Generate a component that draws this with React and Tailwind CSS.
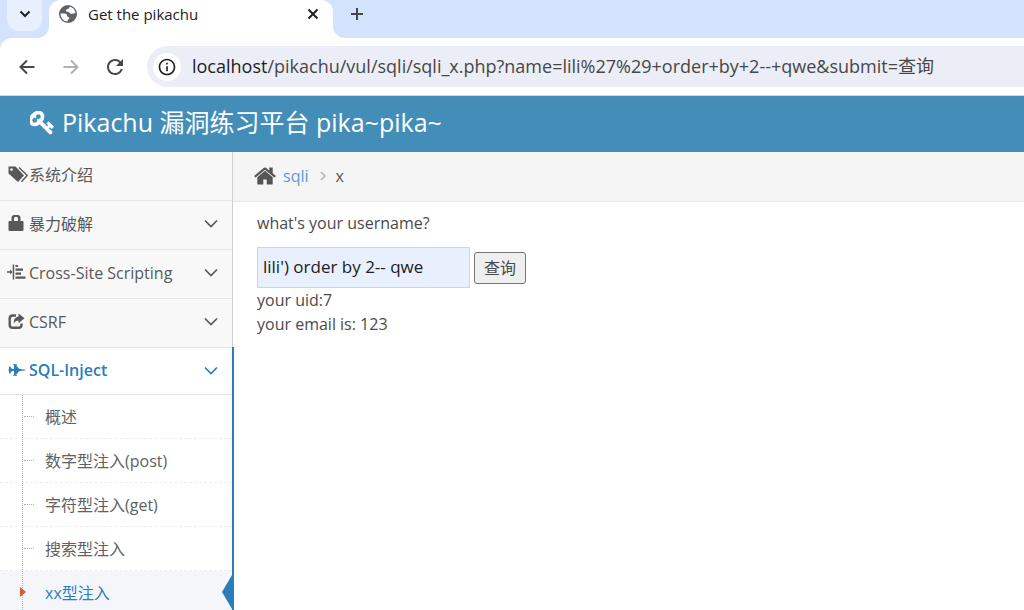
import React, { useState } from "react";
import { MdInfoOutline, MdRefresh } from "react-icons/md";

const menuItems = [
  { name: "系统介绍", icon: "tags", expandable: false },
  { name: "暴力破解", icon: "lock", expandable: true },
  { name: "Cross-Site Scripting", icon: "align", expandable: true },
  { name: "CSRF", icon: "share", expandable: true },
  { name: "SQL-Inject", icon: "jet", expandable: true, open: true },
];

const subItems = ["概述", "数字型注入(post)", "字符型注入(get)", "搜索型注入", "xx型注入"];

const KeyIcon = () => (
  <svg viewBox="60 120 1664 1664" className="h-6 w-6 shrink-0" fill="currentColor" stroke="currentColor" strokeWidth="60">
    <path d="M832 512q0-80-56-136t-136-56-136 56-56 136q0 42 19 83-41-19-83-19-80 0-136 56t-56 136 56 136 136 56 136-56 56-136q0-42-19-83 41 19 83 19 80 0 136-56t56-136zm851 704q0 17-49 66t-66 49q-9 0-28.5-16t-36.5-33-38.5-40-24.5-26l-96 96 220 220q28 28 28 68 0 42-39 81t-81 39q-40 0-68-28l-671-671q-176 131-365 131-163 0-265.5-102.5t-102.5-265.5q0-160 95-313t248-248 313-95q163 0 265.5 102.5t102.5 265.5q0 189-131 365l355 355 96-96q-3-3-26-24.5t-40-38.5-33-36.5-16-28.5q0-17 49-66t66-49q13 0 23 10 6 6 46 44.5t82 79.5 86.5 86 73 78 28.5 41z" />
  </svg>
);

const HomeIcon = () => (
  <svg viewBox="0 0 1792 1792" className="h-6 w-6 shrink-0" fill="currentColor">
    <path d="M1472 992v480q0 26-19 45t-45 19h-384v-384h-256v384h-384q-26 0-45-19t-19-45v-480q0-1 .5-3t.5-3l575-474 575 474q1 2 1 6zm223-69l-62 74q-8 9-21 11h-3q-13 0-21-7l-692-577-692 577q-12 8-24 7-13-2-21-11l-62-74q-8-10-7-23.5t11-21.5l719-599q32-26 76-26t76 26l244 204v-195q0-14 9-23t23-9h192q14 0 23 9t9 23v408l219 182q10 8 11 21.5t-7 23.5z" />
  </svg>
);

const GlobeIcon = () => (
  <svg viewBox="0 0 20 20" className="h-5 w-5 shrink-0">
    <circle cx="10" cy="10" r="9" fill="#5f6368" />
    <path
      d="M12.3 2.8C11 3 11.4 4.6 10 5c-1.500.4-2.300.8-2 2 .2 1 1.300.8 2.500.9 1.200.1 1 1.600 2.200 1.900 1.500.3 2.500-.6 4.800-.6A7.600 7.600 0 0 0 12.300 2.800z"
      fill="#fff"
    />
    <path
      d="M2.600 9.200c2 .2 5.200.2 6 1.100.7.9 0 1.700 1 2.400.9.6 1.800.3 1.700 1.500-.1 1.100-1.700 1-1.700 2.100v1.300A7.500 7.500 0 0 1 2.600 9.200z"
      fill="#fff"
    />
  </svg>
);

const ArrowIcon = () => (
  <svg viewBox="0 0 20 20" className="h-5 w-5" fill="none" stroke="currentColor" strokeWidth="2">
    <path d="M10 3.500L3.500 10l6.500 6.500M3.500 10H17.500" />
  </svg>
);

const ChevronDown = () => (
  <svg viewBox="0 0 14 9" className="ml-auto h-[9px] w-3.5" fill="none" stroke="currentColor" strokeWidth="1.7">
    <path d="M1 1.500l6 6 6-6" />
  </svg>
);

const MenuIcon = ({ name }) => {
  if (name === "tags") {
    return (
      <svg viewBox="0 0 21 18" className="h-[18px] w-[21px] shrink-0" fill="currentColor">
        <path fillRule="evenodd" d="M.5 .5H7.500L16 9.500 10 16 .5 7.500zM3.500 2.200a1.300 1.300 0 1 0 .01 0z" />
        <path d="M11 1.500L19.200 9.500 13.500 15.800" fill="none" stroke="currentColor" strokeWidth="1.400" />
      </svg>
    );
  }
  if (name === "lock") {
    return (
      <svg viewBox="0 0 21 18" className="h-[18px] w-[21px] shrink-0" fill="currentColor">
        <path
          fillRule="evenodd"
          d="M3.500 6V3Q3.500 0 6.500 0H9.500Q12.500 0 12.500 3V6H14.500Q15.500 6 15.500 7V15Q15.500 16 14.500 16H1.500Q.5 16 .5 15V7Q.5 6 1.500 6zM6 6H10V3.500Q10 2 8.800 2H7.200Q6 2 6 3.500z"
        />
      </svg>
    );
  }
  if (name === "align") {
    return (
      <svg viewBox="0 0 21 18" className="h-[18px] w-[21px] shrink-0 overflow-visible" fill="currentColor">
        <path d="M-1 7.300H2V5.500L4.500 8 2 10.500V8.700H-1zM4.700 .5H6.200V15.500H4.700zM7.500 1H10V3H7.500zM7.500 4.500H15V6.700H7.500zM7.500 8.500H13V10.700H7.500zM7.500 12.500H17.500V14.700H7.500z" />
      </svg>
    );
  }
  if (name === "share") {
    return (
      <svg viewBox="0 0 21 18" className="h-[18px] w-[21px] shrink-0">
        <path d="M8 2.500H5Q1.700 2.500 1.700 5.500V12Q1.700 14.800 4.700 14.800H10.500Q13.500 14.800 13.500 12V10.500" fill="none" stroke="currentColor" strokeWidth="2.400" />
        <path d="M10.500 .5L16.500 5.300 10.500 10.200V7.500Q7.500 7.500 5.800 10.700 5.500 4 10.500 3.500z" fill="currentColor" />
      </svg>
    );
  }
  return (
    <svg viewBox="0 0 21 18" className="h-[18px] w-[21px] shrink-0" fill="currentColor">
      <path d="M1 5.500H2L4 8H6V4H5V3.300H9V4H8L10.500 7.300 12 8 17.500 8.700V9.300L12 10 10.500 10.700 8 14H9V14.700H5V14H6V10H4L2 12.500H1V9.700H.5V8.300H1z" />
    </svg>
  );
};

const BrowserBar = () => (
  <div className="bg-[#d3e3fd] text-[#202124]">
    <div className="flex h-[38px]">
      <div className="w-[49px] bg-white">
        <div className="h-full rounded-br-xl bg-[#d3e3fd] pl-[7px]">
          <button aria-label="Search tabs" className="flex h-[31px] w-[35px] items-center justify-center rounded-b-xl bg-[#e9f0fd] pb-1">
            <svg viewBox="0 0 12 8" className="h-2 w-3" fill="none" stroke="currentColor" strokeWidth="2">
              <path d="M1.500 1.500L6 6 10.500 1.500" />
            </svg>
          </button>
        </div>
      </div>
      <div className="flex w-[284px] items-start rounded-t-xl bg-white pl-[9px]">
        <div className="flex h-7 flex-1 items-center">
          <GlobeIcon />
          <span className="ml-2.5 pt-px text-[15px]">Get the pikachu</span>
          <button aria-label="Close tab" className="mr-[14px] ml-auto">
            <svg viewBox="0 0 12 12" className="h-3 w-3" fill="none" stroke="currentColor" strokeWidth="2">
              <path d="M1.500 1.500L10.500 10.500M10.500 1.500L1.500 10.500" />
            </svg>
          </button>
        </div>
      </div>
      <div className="flex-1 bg-white">
        <div className="h-full rounded-bl-xl bg-[#d3e3fd]">
          <button aria-label="New tab" className="ml-[17px] flex h-7 items-center">
            <svg viewBox="0 0 14 14" className="h-3.5 w-3.5 text-[#474747]" fill="none" stroke="currentColor" strokeWidth="2">
              <path d="M7 1V13M1 7H13" />
            </svg>
          </button>
        </div>
      </div>
    </div>
    <div className="flex h-[58px] items-center rounded-tl-xl border-b border-[#cfdbe0] bg-white pl-[17px]">
      <button aria-label="Back" className="text-[#474747]">
        <ArrowIcon />
      </button>
      <button aria-label="Forward" className="ml-6 rotate-180 text-[#b0b0b0]">
        <ArrowIcon />
      </button>
      <button aria-label="Reload" className="ml-[22px]">
        <MdRefresh className="h-6 w-6 text-[#474747]" />
      </button>
      <div className="ml-5 flex h-[41px] flex-1 items-center rounded-l-full bg-[#ebeef7] pl-1.5">
        <span className="flex h-7 w-7 items-center justify-center rounded-full bg-white">
          <MdInfoOutline className="h-5 w-5" />
        </span>
        <p className="ml-[11px] text-[18px] whitespace-nowrap text-[#474747]">
          <span className="text-[#202124]">localhost</span>
          /pikachu/vul/sqli/sqli_x.php?name=lili%27%29+order+by+2--+qwe&amp;submit=查询
        </p>
      </div>
    </div>
  </div>
);

const SubMenu = () => (
  <ul className="text-[#616161]">
    {subItems.map((name, i) => {
      const active = i === subItems.length - 1;
      return (
        <li key={name} className={active ? "relative bg-[#f4f6fa]" : "relative border-b border-dashed border-[#ededed]"}>
          <span className="absolute inset-y-0 left-[22px] border-l border-dotted border-[#8cb8dc]" />
          {active ? (
            <>
              <svg viewBox="0 0 6 10" className="absolute top-4 left-5 h-2.5 w-1.5" fill="#c86139">
                <path d="M0 0l6 5-6 5z" />
              </svg>
              <svg viewBox="0 0 10 34" className="absolute top-1 right-0 h-[34px] w-2.5" fill="#2b7dbc">
                <path d="M10 0v34L0 17z" />
              </svg>
            </>
          ) : (
            <span className="absolute top-[21px] left-6 w-2.5 border-t border-dotted border-[#8cb8dc]" />
          )}
          <a href="#" className={active ? "flex h-[43px] items-center pl-[45px] text-[#2b7dbc]" : "flex h-[43px] items-center pl-[45px]"}>
            {name}
          </a>
        </li>
      );
    })}
  </ul>
);

const Sidebar = () => (
  <nav className="w-[233px] shrink-0 bg-[#f8f8f8] text-[16px] text-[#585858]">
    {menuItems.map((item) => (
      <div key={item.name} className={item.open ? "-mt-px -mr-px border-r-2 border-[#2b7dbc] bg-white" : "border-r border-[#d0d0d0]"}>
        <a
          href="#"
          className={
            item.open
              ? "flex h-12 items-center border-y border-[#e5e5e5] pr-[14px] pb-0.5 pl-2 font-semibold text-[#2b7dbc]"
              : "flex h-[49px] items-center border-b border-[#e5e5e5] pr-[14px] pb-[3px] pl-2"
          }
        >
          <MenuIcon name={item.icon} />
          <span>{item.name}</span>
          {item.expandable && <ChevronDown />}
        </a>
        {item.open && <SubMenu />}
      </div>
    ))}
  </nav>
);

const App = () => {
  const [username, setUsername] = useState("lili') order by 2-- qwe");

  return (
    <div className="flex h-screen flex-col overflow-hidden bg-white font-['Open_Sans','Noto_Sans_CJK_SC',sans-serif]">
      <BrowserBar />
      <header className="flex h-14 shrink-0 items-center bg-[#438eb9] pb-0.5 pl-[30px] text-white">
        <KeyIcon />
        <h1 className="ml-2 text-[25px]">Pikachu 漏洞练习平台 pika~pika~</h1>
      </header>
      <div className="flex flex-1">
        <Sidebar />
        <main className="flex-1 text-[16px]">
          <div className="flex h-[50px] items-center border-b border-[#e5e5e5] bg-[#f5f5f5] pb-0.5 pl-5 text-[#555]">
            <HomeIcon />
            <a href="#" className="ml-1.5 text-[#5b9bd0]">
              sqli
            </a>
            <svg viewBox="0 0 6 10" className="mr-2.5 ml-[11px] h-2.5 w-1.5" fill="none" stroke="#b2b6bf" strokeWidth="1.7">
              <path d="M1 1l4 4-4 4" />
            </svg>
            <span>x</span>
          </div>
          <form className="px-6 pt-[9px] leading-6 text-[#4a4a4a]" onSubmit={(e) => e.preventDefault()}>
            <label htmlFor="username">what's your username?</label>
            <div className="mt-3 flex items-center">
              <input
                id="username"
                type="text"
                value={username}
                onChange={(e) => setUsername(e.target.value)}
                className="h-[41px] w-[213px] border border-[#d0d5dd] bg-[#e8f0fe] px-[5px] pb-0.5 text-[17px] text-[#202020]"
              />
              <button type="submit" className="ml-1 h-8 w-[52px] rounded-[3px] border border-[#767676] bg-[#efefef]">
                查询
              </button>
            </div>
            <p>your uid:7</p>
            <p>your email is: 123</p>
          </form>
        </main>
      </div>
    </div>
  );
};

export default App;
